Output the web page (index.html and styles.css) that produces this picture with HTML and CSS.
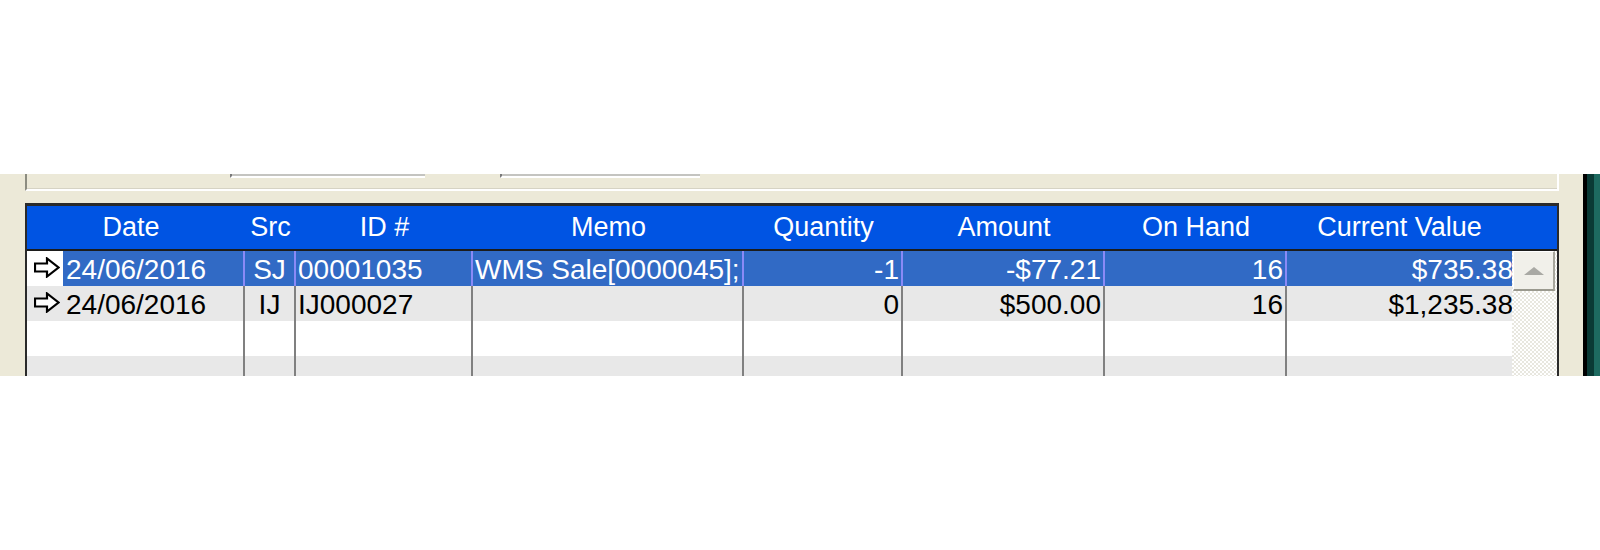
FILE: index.html
```html
<!DOCTYPE html>
<html lang="en">
<head>
    <meta charset="UTF-8">
    <title>Stock Transactions</title>
    <link rel="stylesheet" href="styles.css">
</head>
<body>

    <div class="window">
        <div class="pane">
            <div class="groupbox">
                <div class="field field-first"></div>
                <div class="field field-second"></div>
            </div>

            <div class="grid">
                <div class="grid-head">
                    <div class="head-date">Date</div>
                    <div>Src</div>
                    <div>ID #</div>
                    <div>Memo</div>
                    <div>Quantity</div>
                    <div>Amount</div>
                    <div>On Hand</div>
                    <div>Current Value</div>
                    <div></div>
                </div>

                <div class="grid-body">
                    <div class="rows">
                        <div class="row sel">
                            <div class="cell date">
                                <span class="ind">
                                    <svg width="26" height="21" viewBox="0 0 26 21"><path d="M1 6.5 H13 V1.5 L24.5 10.5 L13 19.5 V14.5 H1 Z" fill="#fff" stroke="#000" stroke-width="2.2" stroke-linejoin="miter"/></svg>
                                </span>
                                <span class="val">24/06/2016</span>
                            </div>
                            <div class="cell center">SJ</div>
                            <div class="cell">00001035</div>
                            <div class="cell">WMS Sale[0000045];</div>
                            <div class="cell right">-1</div>
                            <div class="cell right">-$77.21</div>
                            <div class="cell right">16</div>
                            <div class="cell right last">$735.38</div>
                        </div>
                        <div class="row alt">
                            <div class="cell date">
                                <span class="ind">
                                    <svg width="26" height="21" viewBox="0 0 26 21"><path d="M1 6.5 H13 V1.5 L24.5 10.5 L13 19.5 V14.5 H1 Z" fill="#fff" stroke="#000" stroke-width="2.2" stroke-linejoin="miter"/></svg>
                                </span>
                                <span class="val">24/06/2016</span>
                            </div>
                            <div class="cell center">IJ</div>
                            <div class="cell">IJ000027</div>
                            <div class="cell"></div>
                            <div class="cell right">0</div>
                            <div class="cell right">$500.00</div>
                            <div class="cell right">16</div>
                            <div class="cell right last">$1,235.38</div>
                        </div>
                        <div class="row">
                            <div class="cell date"><span class="ind"></span><span class="val"></span></div>
                            <div class="cell"></div>
                            <div class="cell"></div>
                            <div class="cell"></div>
                            <div class="cell"></div>
                            <div class="cell"></div>
                            <div class="cell"></div>
                            <div class="cell last"></div>
                        </div>
                        <div class="row alt">
                            <div class="cell date"><span class="ind"></span><span class="val"></span></div>
                            <div class="cell"></div>
                            <div class="cell"></div>
                            <div class="cell"></div>
                            <div class="cell"></div>
                            <div class="cell"></div>
                            <div class="cell"></div>
                            <div class="cell last"></div>
                        </div>
                    </div>

                    <div class="vscroll">
                        <div class="scroll-btn"><span class="tri"></span></div>
                    </div>
                </div>
            </div>
        </div>
        <div class="edge"></div>
    </div>

</body>
</html>
```

FILE: styles.css
```css
/* page */
body {
    margin: 0;
    background: #fff;
    font-family: "Liberation Sans", Arial, sans-serif;
}
.window {
    display: flex;
    margin-top: 174px;
    height: 202px;
    overflow: hidden;
}
.pane {
    flex: 1;
    background: #ece9d8;
    padding-left: 25px;
}
.edge {
    width: 17px;
    flex: none;
    background: linear-gradient(to right, #000 0, #000 4px, #0a3a35 4px, #0a3a35 11px, #1d6a60 11px);
}

/* group box above the grid */
.groupbox {
    display: flex;
    width: 1530px;
    height: 15px;
    border-left: 2px solid #8c8c80;
    border-right: 2px solid #fff;
    border-bottom: 2px solid #fff;
    box-shadow: inset 0 -1px 0 #d6d3c4;
}
.field {
    height: 2px;
    background: #c4c4c0;
    border-left: 2px solid #7a7a7a;
    border-bottom: 2px solid #fff;
}
.field-first {
    margin-left: 203px;
    width: 193px;
}
.field-second {
    margin-left: 75px;
    width: 198px;
}

/* the grid */
.grid {
    margin-top: 12px;
    width: 1530px;
    border: 2px solid #2a2a2a;
    border-top-width: 3px;
}
.grid-head {
    display: grid;
    grid-template-columns: 218px 51px 177px 271px 159px 202px 182px 225px 1fr;
    height: 43px;
    background: #0054e3;
    color: #fff;
    font-size: 27px;
    line-height: 43px;
    text-align: center;
    border-bottom: 2px solid #1c1c1c;
    white-space: nowrap;
}
.head-date {
    padding-right: 10px;
}
.grid-body {
    display: flex;
}
.rows {
    width: 1485px;
    overflow: hidden;
}
.row {
    display: grid;
    grid-template-columns: 218px 51px 177px 271px 159px 202px 182px 226px;
    height: 35px;
    background: #fff;
    font-size: 28px;
    color: #000;
}
.row.alt {
    background: #e8e8e8;
}
.cell {
    border-right: 2px solid #808080;
    padding: 2px 2px 0;
    line-height: 33px;
    white-space: nowrap;
    overflow: hidden;
}
.cell.center {
    text-align: center;
}
.cell.right {
    text-align: right;
}
.cell.last {
    border-right: none;
    padding-right: 0;
}
.cell.date {
    display: flex;
    padding: 0;
}
.ind {
    flex: none;
    width: 36px;
}
.ind svg {
    display: block;
    margin: 6px 0 0 7px;
}
.val {
    flex: 1;
    padding: 2px 2px 0 3px;
}

/* selected row */
.row.sel .cell {
    background: #316ac5;
    color: #fff;
    border-right-color: #8a8af6;
}
.row.sel .cell.last {
    border-right: none;
}
.row.sel .cell.date {
    background: transparent;
}
.row.sel .date .val {
    background: #316ac5;
}

/* vertical scrollbar */
.vscroll {
    width: 45px;
    flex: none;
    background-color: #f6f5f0;
    background-image: repeating-conic-gradient(#ffffff 0 25%, #e8e7df 0 50%);
    background-size: 4px 4px;
}
.scroll-btn {
    display: flex;
    align-items: center;
    justify-content: center;
    width: 39px;
    height: 37px;
    margin-left: 1px;
    background: #f1f0ea;
    border-top: 1px solid #fff;
    border-left: 1px solid #fff;
    border-right: 2px solid #a7a69c;
    border-bottom: 2px solid #9a998e;
}
.tri {
    width: 0;
    height: 0;
    border-left: 10px solid transparent;
    border-right: 10px solid transparent;
    border-bottom: 8px solid #a9a9a4;
}
```
